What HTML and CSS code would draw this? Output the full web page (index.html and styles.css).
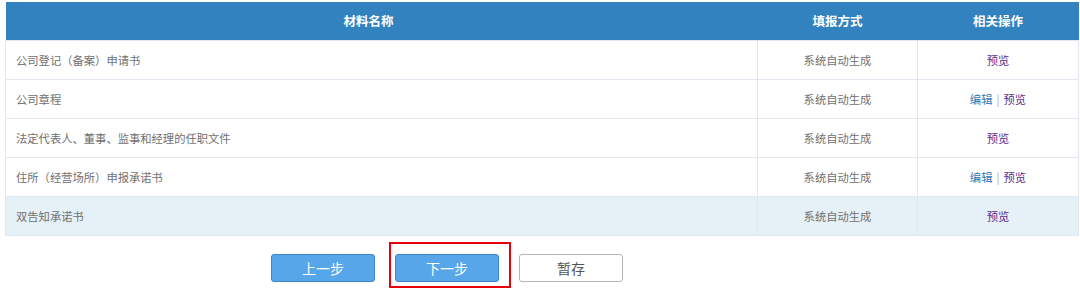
FILE: index.html
```html
<!DOCTYPE html>
<html lang="zh">
<head>
<meta charset="utf-8">
<link rel="stylesheet" href="styles.css">
</head>
<body>
<div class="page">
  <table class="materials">
    <colgroup>
      <col class="c-name">
      <col class="c-mode">
      <col class="c-ops">
    </colgroup>
    <thead>
      <tr><th class="h-name">材料名称</th><th>填报方式</th><th>相关操作</th></tr>
    </thead>
    <tbody>
      <tr><td class="name">公司登记（备案）申请书</td><td class="mode">系统自动生成</td><td class="ops"><a class="view">预览</a></td></tr>
      <tr><td class="name">公司章程</td><td class="mode">系统自动生成</td><td class="ops"><a class="edit">编辑</a><span class="sep">|</span><a class="view">预览</a></td></tr>
      <tr><td class="name">法定代表人、董事、监事和经理的任职文件</td><td class="mode">系统自动生成</td><td class="ops"><a class="view">预览</a></td></tr>
      <tr><td class="name">住所（经营场所）申报承诺书</td><td class="mode">系统自动生成</td><td class="ops"><a class="edit">编辑</a><span class="sep">|</span><a class="view">预览</a></td></tr>
      <tr class="hl"><td class="name">双告知承诺书</td><td class="mode">系统自动生成</td><td class="ops"><a class="view">预览</a></td></tr>
    </tbody>
  </table>
  <div class="actions">
    <button class="btn primary">上一步</button>
    <span class="marked"><button class="btn primary">下一步</button></span>
    <button class="btn plain">暂存</button>
  </div>
</div>
</body>
</html>
```

FILE: styles.css
```css
* { box-sizing: border-box; }
html, body { margin: 0; padding: 0; background: #fff; overflow: hidden; }
body {
  font-family: "Microsoft YaHei", "Noto Sans CJK SC", "Noto Sans", sans-serif;
  font-size: 11.3px;
  color: #707070;
}
.page { padding: 2px 0 0 5px; min-height: 291px; }
.materials {
  width: 1073px;
  border-collapse: collapse;
  table-layout: fixed;
}
.c-name { width: 752px; }
.c-mode { width: 160px; }
.c-ops { width: 161px; }
.materials th {
  background: #3282c0;
  color: #fff;
  font-weight: bold;
  font-size: 12.5px;
  height: 38px;
  text-align: center;
  padding: 0;
  border: 0;
}
.materials th.h-name { padding-right: 26px; }
.materials td {
  height: 39px;
  border: 1px solid #e1e8f0;
  padding: 0;
  text-align: center;
  vertical-align: middle;
}
.materials td.name { text-align: left; padding-left: 10px; }
.materials tr.hl td { background: #e6f0f7; }
.ops a { text-decoration: none; cursor: pointer; }
.ops .view { color: #5b2d8e; }
.ops .edit { color: #2b79b3; }
.ops .sep { color: #aaa; margin: 0 4px; }
.actions {
  display: flex;
  gap: 20px;
  padding: 18px 0 0 266px;
  align-items: center;
}
.btn {
  width: 104px;
  height: 28px;
  border-radius: 3px;
  font-family: "Microsoft YaHei", "Noto Sans CJK SC", sans-serif;
  font-size: 14px;
  padding: 0;
  cursor: pointer;
}
.btn.primary {
  background: #58a6ea;
  border: 1px solid #3f86c6;
  color: #fff;
}
.btn.plain {
  background: #fff;
  border: 1px solid #b4b4b4;
  color: #555;
}
.marked { position: relative; display: flex; }
.marked::after {
  content: "";
  position: absolute;
  left: -6px;
  top: -12px;
  right: -12px;
  bottom: -6px;
  border: 2px solid #e8000b;
  pointer-events: none;
}
```
